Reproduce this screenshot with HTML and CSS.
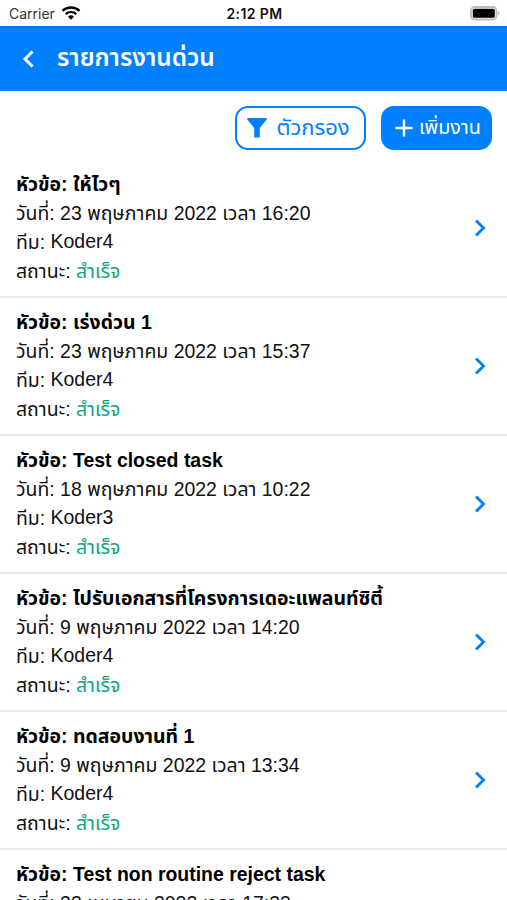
FILE: index.html
```html
<!DOCTYPE html>
<html lang="th">

<head>
  <meta charset="UTF-8">
  <meta name="viewport" content="width=device-width, initial-scale=1.0">
  <title>รายการงานด่วน</title>
  <link rel="stylesheet" href="styles.css">
</head>

<body>

  <div class="status-bar">
    <div class="carrier">
      <span>Carrier</span>
      <svg width="20" height="14" viewBox="0 0 20 14">
        <path d="M1.500 4.800a12.500 12.500 0 0 1 17 0" fill="none" stroke="#000" stroke-width="2.400" />
        <path d="M4.700 8.100a7.700 7.700 0 0 1 10.600 0" fill="none" stroke="#000" stroke-width="2.200" />
        <path d="M7 10.700a4.300 4.300 0 0 1 6 0L10 13.700z" />
      </svg>
    </div>
    <div class="time">2:12 PM</div>
    <div class="battery">
      <svg width="30" height="15" viewBox="0 0 30 15">
        <rect x="1" y="1" width="25.500" height="12.500" rx="3.500" fill="#fff" stroke="#bdbdbd" stroke-width="1.800" />
        <rect x="2.800" y="2.800" width="22" height="9" rx="1.500" />
        <path d="M27.800 5v4.500c2.200-.8 2.200-3.700 0-4.500z" fill="#bdbdbd" />
      </svg>
    </div>
  </div>

  <div class="header">
    <svg class="back" width="12" height="18" viewBox="0 0 12 18">
      <path d="M10.500 1.500L3 9l7.500 7.500" fill="none" stroke="#fff" stroke-width="3" />
    </svg>
    <h3>รายการงานด่วน</h3>
  </div>

  <div class="actions">
    <button class="button filter">
      <svg width="20" height="20" viewBox="0 0 20 20">
        <path d="M.5 0h19q.8.800 0 1.700L12.800 10v9.500H7.200V10L.5 1.700Q-.3.800.5 0z" fill="#0080ff" />
      </svg>
      <span>ตัวกรอง</span>
    </button>
    <button class="button add">
      <svg width="18" height="18" viewBox="0 0 18 18">
        <path d="M9 .5v17M.5 9h17" stroke="#fff" stroke-width="2.400" />
      </svg>
      <span>เพิ่มงาน</span>
    </button>
  </div>

  <div class="task-list">
    <div class="task">
      <div class="text">
        <div class="title">หัวข้อ: ให้ไวๆ</div>
        <div>วันที่: 23 พฤษภาคม 2022 เวลา 16:20</div>
        <div>ทีม: <span class="team">Koder4</span></div>
        <div>สถานะ: <span class="done">สำเร็จ</span></div>
      </div>
      <svg class="arrow" width="12" height="18" viewBox="0 0 12 18"><path d="M2 1.500L9.500 9 2 16.500" /></svg>
    </div>
    <div class="task">
      <div class="text">
        <div class="title">หัวข้อ: เร่งด่วน 1</div>
        <div>วันที่: 23 พฤษภาคม 2022 เวลา 15:37</div>
        <div>ทีม: <span class="team">Koder4</span></div>
        <div>สถานะ: <span class="done">สำเร็จ</span></div>
      </div>
      <svg class="arrow" width="12" height="18" viewBox="0 0 12 18"><path d="M2 1.500L9.500 9 2 16.500" /></svg>
    </div>
    <div class="task">
      <div class="text">
        <div class="title">หัวข้อ: Test closed task</div>
        <div>วันที่: 18 พฤษภาคม 2022 เวลา 10:22</div>
        <div>ทีม: <span class="team">Koder3</span></div>
        <div>สถานะ: <span class="done">สำเร็จ</span></div>
      </div>
      <svg class="arrow" width="12" height="18" viewBox="0 0 12 18"><path d="M2 1.500L9.500 9 2 16.500" /></svg>
    </div>
    <div class="task">
      <div class="text">
        <div class="title">หัวข้อ: ไปรับเอกสารที่โครงการเดอะแพลนท์ซิตี้</div>
        <div>วันที่: 9 พฤษภาคม 2022 เวลา 14:20</div>
        <div>ทีม: <span class="team">Koder4</span></div>
        <div>สถานะ: <span class="done">สำเร็จ</span></div>
      </div>
      <svg class="arrow" width="12" height="18" viewBox="0 0 12 18"><path d="M2 1.500L9.500 9 2 16.500" /></svg>
    </div>
    <div class="task">
      <div class="text">
        <div class="title">หัวข้อ: ทดสอบงานที่ 1</div>
        <div>วันที่: 9 พฤษภาคม 2022 เวลา 13:34</div>
        <div>ทีม: <span class="team">Koder4</span></div>
        <div>สถานะ: <span class="done">สำเร็จ</span></div>
      </div>
      <svg class="arrow" width="12" height="18" viewBox="0 0 12 18"><path d="M2 1.500L9.500 9 2 16.500" /></svg>
    </div>
    <div class="task">
      <div class="text">
        <div class="title">หัวข้อ: Test non routine reject task</div>
        <div>วันที่: 22 เมษายน 2022 เวลา 17:33</div>
      </div>
    </div>
  </div>

</body>

</html>
```
FILE: styles.css
```css
body {
  font-family: "Liberation Sans", "Noto Sans Thai", "Noto Sans", sans-serif;
  margin: 0;
  height: 900px;
  display: flex;
  flex-direction: column;
  overflow: hidden;
  color: #111;
  background-color: #fff;
}

.status-bar {
  display: grid;
  grid-template-columns: 1fr auto 1fr;
  align-items: center;
  height: 26px;
  padding: 0 7px 0 9px;
  font-size: 14px;
  font-family: Inter, sans-serif;
  flex-shrink: 0;
}

.carrier {
  display: flex;
  align-items: center;
  gap: 6px;
  color: #333;
}

.time {
  font-weight: 600;
  letter-spacing: 0.4px;
}

.battery {
  display: flex;
  justify-content: flex-end;
}

.header {
  display: flex;
  align-items: center;
  height: 65px;
  padding-left: 22px;
  background-color: #0080ff;
  color: #fff;
  flex-shrink: 0;
}

.header h3 {
  margin: 0 0 0 23px;
  font-size: 24.400px;
  font-weight: 600;
}

.actions {
  display: flex;
  justify-content: flex-end;
  gap: 15px;
  padding: 15px 15px 0;
  height: 54px;
  flex-shrink: 0;
}

.button {
  display: flex;
  align-items: center;
  justify-content: center;
  box-sizing: border-box;
  height: 44px;
  padding: 0;
  border: 2px solid #0080ff;
  border-radius: 13px;
  font-family: inherit;
}

.filter {
  width: 131px;
  gap: 9px;
  padding-right: 4px;
  background-color: #fff;
  color: #0080ff;
  font-size: 22px;
}

.add {
  width: 111px;
  gap: 6px;
  padding-left: 3px;
  background-color: #0080ff;
  color: #fff;
  font-size: 19.700px;
}

.task {
  display: flex;
  align-items: center;
  justify-content: space-between;
  box-sizing: border-box;
  height: 138px;
  padding: 0 21px 0 16px;
  border-bottom: 2px solid #e8e8e8;
  font-size: 19.450px;
  line-height: 29.300px;
}

.task .text {
  align-self: flex-start;
  padding-top: 9.500px;
  white-space: nowrap;
}

.task .title {
  font-weight: bold;
  color: #000;
}

.task .team {
  line-height: 1;
  vertical-align: 1px;
}

.task .done {
  color: #10a37f;
}

.arrow path {
  fill: none;
  stroke: #0080ff;
  stroke-width: 2.800;
}
```
